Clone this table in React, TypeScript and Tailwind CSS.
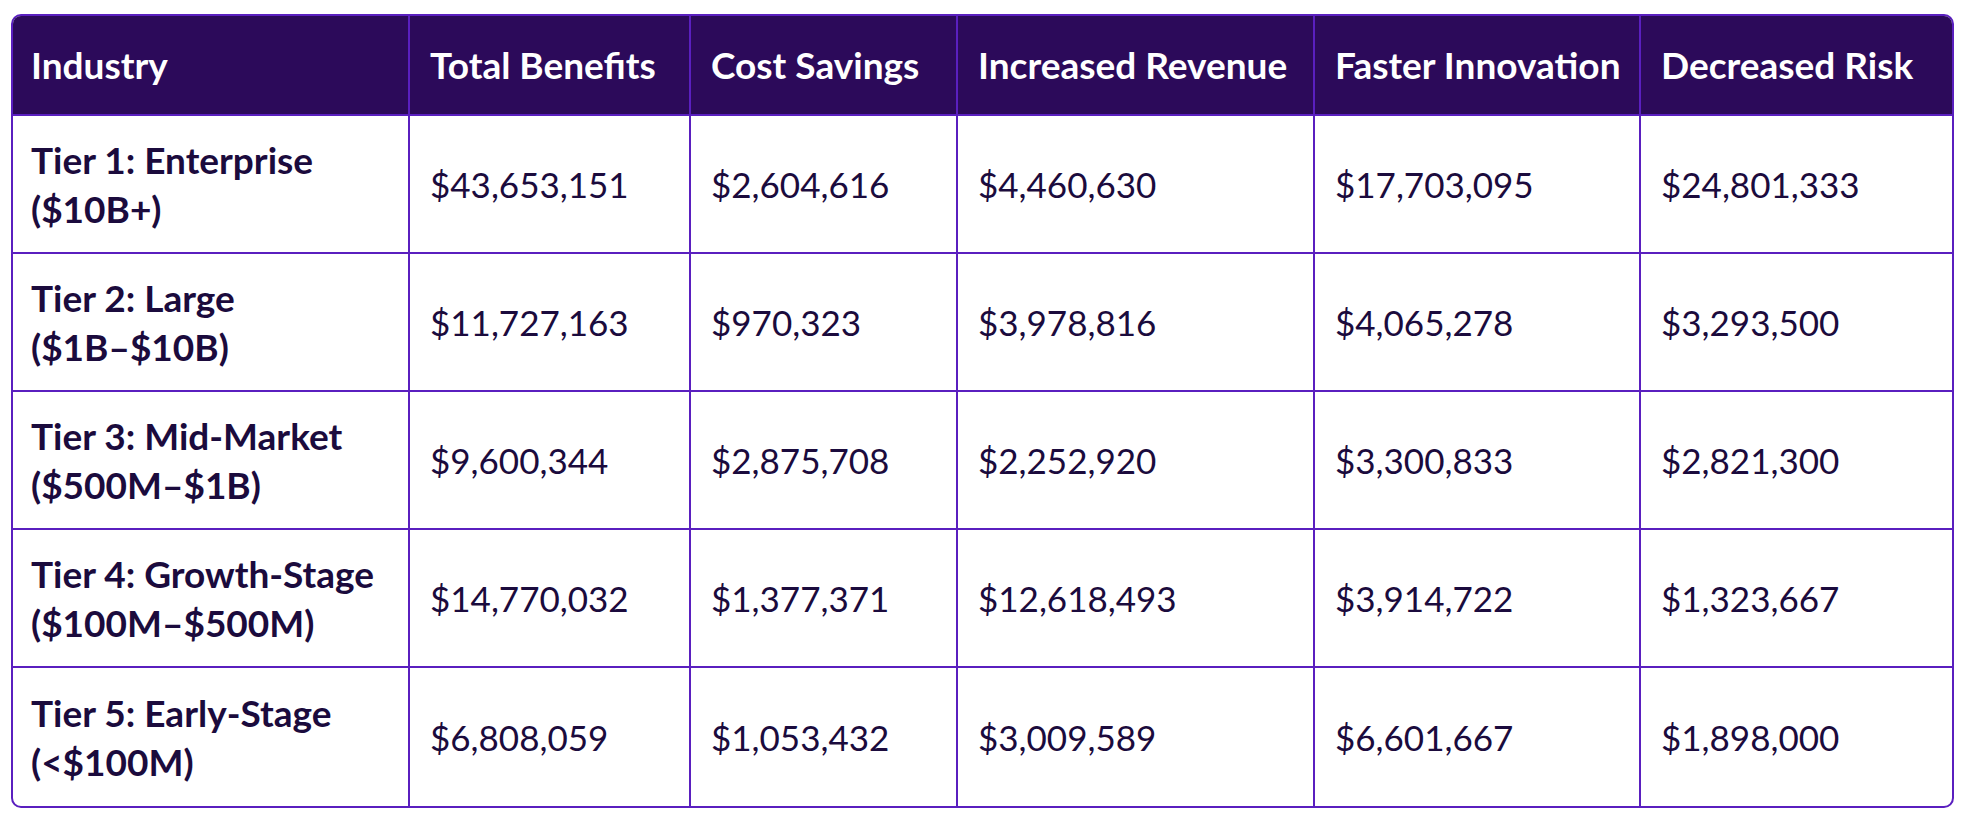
const headers = [
  'Industry',
  'Total Benefits',
  'Cost Savings',
  'Increased Revenue',
  'Faster Innovation',
  'Decreased Risk',
];

const rows = [
  {
    tier: 'Tier 1: Enterprise',
    range: '($10B+)',
    values: ['$43,653,151', '$2,604,616', '$4,460,630', '$17,703,095', '$24,801,333'],
  },
  {
    tier: 'Tier 2: Large',
    range: '($1B–$10B)',
    values: ['$11,727,163', '$970,323', '$3,978,816', '$4,065,278', '$3,293,500'],
  },
  {
    tier: 'Tier 3: Mid-Market',
    range: '($500M–$1B)',
    values: ['$9,600,344', '$2,875,708', '$2,252,920', '$3,300,833', '$2,821,300'],
  },
  {
    tier: 'Tier 4: Growth-Stage',
    range: '($100M–$500M)',
    values: ['$14,770,032', '$1,377,371', '$12,618,493', '$3,914,722', '$1,323,667'],
  },
  {
    tier: 'Tier 5: Early-Stage',
    range: '(<$100M)',
    values: ['$6,808,059', '$1,053,432', '$3,009,589', '$6,601,667', '$1,898,000'],
  },
];

export default function App() {
  return (
    <div
      className="min-h-[830px] bg-white pt-[14px] pl-[11px]"
      style={{ fontFamily: 'Lato, "Noto Sans", sans-serif' }}
    >
      <div className="w-[1943px] overflow-hidden rounded-[10px] border-2 border-[#5a1fbf]">
        <div className="grid grid-cols-[397px_281px_267px_357px_326px_311px]">
          {/* Header */}
          {headers.map((h, i) => (
            <div
              key={h}
              className={`flex h-[100px] items-center border-b-2 border-[#5a1fbf] bg-[#2c0a5a] text-[37px] font-bold whitespace-nowrap text-white ${
                i === 0 ? 'pl-[18px]' : 'pl-[20px]'
              } ${i < headers.length - 1 ? 'border-r-2' : ''}`}
            >
              {h}
            </div>
          ))}

          {/* Body rows */}
          {rows.map((row, r) => {
            const last = r === rows.length - 1;
            return [
              <div
                key={`${row.tier}-label`}
                className={`flex h-[138px] flex-col justify-center border-r-2 border-[#5a1fbf] pl-[18px] text-[37px] font-bold leading-[49px] whitespace-nowrap text-[#1b0b3d] ${
                  last ? '' : 'border-b-2'
                }`}
              >
                <span>{row.tier}</span>
                <span>{row.range}</span>
              </div>,
              ...row.values.map((v, c) => (
                <div
                  key={`${row.tier}-${c}`}
                  className={`flex h-[138px] items-center border-[#5a1fbf] pl-[20px] text-[35px] text-[#1b0b3d] ${
                    last ? '' : 'border-b-2'
                  } ${c < row.values.length - 1 ? 'border-r-2' : ''}`}
                >
                  {v}
                </div>
              )),
            ];
          })}
        </div>
      </div>
    </div>
  );
}
